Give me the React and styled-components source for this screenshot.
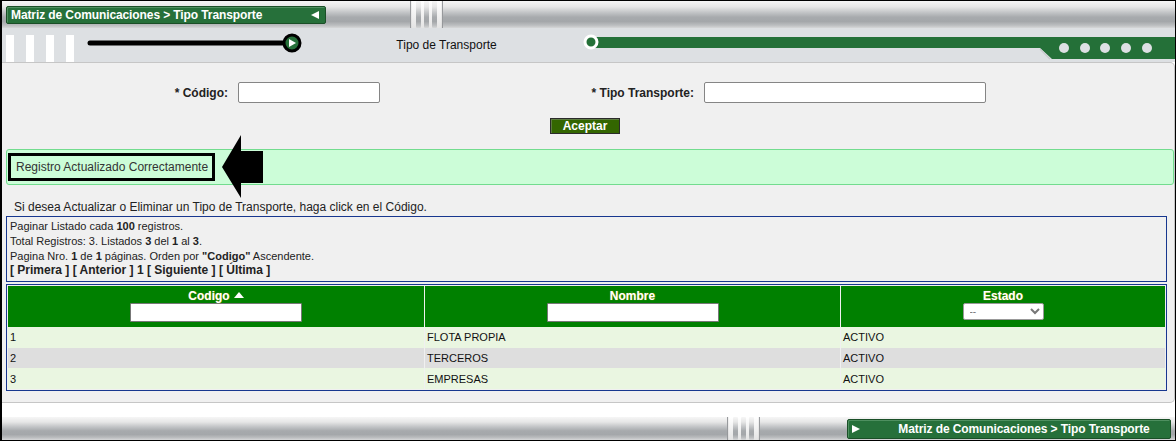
import styled, { createGlobalStyle } from 'styled-components';

const GlobalStyle = createGlobalStyle`
  body {
    margin: 0;
    background: #fff;
    font-family: "Liberation Sans", Arial, sans-serif;
  }
`;

const metal = `linear-gradient(to bottom, #f6f6f6 0%, #e6e6e6 22%, #c3c5c7 42%, #a7aaad 60%, #a4a7aa 76%, #bcbec0 90%, #d6d7d8 100%)`;

const Frame = styled.div`
  width: 1176px;
  height: 441px;
  box-sizing: border-box;
  border: 1px solid #000;
  border-left-width: 2px;
  overflow: hidden;
  display: flex;
  flex-direction: column;
  background: #fff;
`;

const MetalBar = styled.div`
  flex: none;
  height: ${p => p.$h}px;
  display: flex;
  align-items: center;
  background: ${metal};
`;

const Notch = styled.div`
  flex: none;
  align-self: stretch;
  display: flex;
  gap: 3px;
  padding: 0 6px;
  margin-left: ${p => p.$left}px;
  background: linear-gradient(to bottom, #ffffff, #e4e4e4);
  box-shadow: inset 2px 0 1px -1px #8d9093, inset -2px 0 1px -1px #8d9093;
`;

const Stripe = styled.div`
  width: 5px;
  background: ${metal};
  border-radius: 1px;
`;

const Crumb = styled.div`
  flex: none;
  box-sizing: border-box;
  width: ${p => p.$w}px;
  height: ${p => p.$h}px;
  margin-left: ${p => (p.$left === 'auto' ? 'auto' : `${p.$left || 0}px`)};
  margin-right: ${p => p.$right || 0}px;
  display: flex;
  align-items: center;
  gap: 8px;
  padding: 0 6px 0 4px;
  background: #26703a;
  border: 1px solid #1a4f27;
  border-radius: 2px;
  box-shadow: inset 1px 1px 0 #4f9060;
  color: #fff;
  font-size: 12px;
  font-weight: bold;
  white-space: nowrap;
`;

const CrumbText = styled.span`
  flex: 1;
  text-align: ${p => p.$align};
  padding-left: ${p => p.$indent || 0}px;
  letter-spacing: -0.1px;
`;

const Tri = styled.span`
  width: 0;
  height: 0;
  border-top: 4px solid transparent;
  border-bottom: 4px solid transparent;
  ${p => (p.$dir === 'left' ? 'border-right: 8px solid #fff;' : 'border-left: 8px solid #fff;')}
`;

const Band = styled.div`
  flex: none;
  height: 34px;
  display: flex;
  background: #dde0e3;
`;

const Bars = styled.div`
  display: flex;
  gap: 12px;
  margin-left: 4px;
  align-self: flex-end;
`;

const WhiteBar = styled.div`
  width: 8px;
  height: 27px;
  background: #fff;
`;

const BandTitle = styled.div`
  flex: 1;
  text-align: center;
  padding-top: 10px;
  font-size: 12px;
  color: #111;
`;

const Panel = styled.div`
  flex: none;
  height: 341px;
  box-sizing: border-box;
  background: #f0f0f0;
  border: 1px solid #c6c6c6;
  border-left: none;
  border-radius: 0 5px 5px 0;
  padding-left: 1px;
`;

const FormGrid = styled.div`
  display: grid;
  grid-template-columns: 225px 142px 304px 282px;
  column-gap: 10px;
  align-items: center;
  margin-top: 19px;
`;

const Label = styled.label`
  text-align: right;
  font-size: 12px;
  font-weight: bold;
  color: #222;
`;

const TextInput = styled.input`
  box-sizing: border-box;
  width: ${p => p.$w}px;
  height: ${p => p.$h}px;
  border: 1px solid #858585;
  border-radius: 2px;
  background: #fff;
  padding: 0 3px;
  margin: 0;
`;

const ButtonRow = styled.div`
  width: 1164px;
  display: flex;
  justify-content: center;
  margin-top: 15px;
`;

const Button = styled.button`
  box-sizing: border-box;
  width: 70px;
  height: 16px;
  padding: 0;
  background: #336600;
  border: 1px solid #2b2b2b;
  box-shadow: inset 1px 1px 0 #5d7d40;
  color: #fff;
  font-family: "Liberation Sans", Arial, sans-serif;
  font-size: 12px;
  font-weight: bold;
  line-height: 14px;
`;

const Message = styled.div`
  position: relative;
  box-sizing: border-box;
  height: 36px;
  margin: 15px 0 0 3px;
  padding: 3px 1px;
  background: #ccfdd8;
  border: 1px solid #72dc8e;
  border-radius: 3px;
`;

const MessageText = styled.span`
  display: inline-block;
  box-sizing: border-box;
  height: 28px;
  line-height: 22px;
  padding: 0 4px 0 5px;
  border: 3px solid #000;
  font-size: 12px;
  color: #333;
`;

const Arrow = styled.svg`
  position: absolute;
  left: 213px;
  top: -16px;
`;

const Hint = styled.div`
  margin-top: 15px;
  padding-left: 11px;
  font-size: 12px;
  line-height: 14px;
  color: #222;
`;

const InfoBox = styled.div`
  box-sizing: border-box;
  width: 1161px;
  height: 66px;
  margin: 2px 0 0 3px;
  padding: 2px 3px 0;
  border: 1px solid #17378f;
  font-size: 11px;
  line-height: 14.8px;
  color: #222;
`;

const Pager = styled.div`
  font-size: 12px;
  font-weight: bold;
`;

const TableBox = styled.div`
  box-sizing: border-box;
  width: 1161px;
  margin: 2px 0 0 3px;
  padding: 1px 0;
  border: 1px solid #17378f;
`;

const Grid = styled.table`
  width: 100%;
  border-collapse: separate;
  border-spacing: 1px 0;
  table-layout: fixed;
`;

const HeadCell = styled.th`
  height: 41px;
  box-sizing: border-box;
  vertical-align: top;
  padding: 3px 0 0;
  background: #008000;
  color: #fff;
  font-size: 12px;
  font-weight: bold;
  line-height: 14px;
  text-shadow: 0 0 1px #b8a400;
`;

const SortUp = styled.span`
  display: inline-block;
  margin-left: 4px;
  width: 0;
  height: 0;
  vertical-align: 2px;
  border-left: 5px solid transparent;
  border-right: 5px solid transparent;
  border-bottom: 6px solid #fff;
`;

const HeadInput = styled(TextInput)`
  display: block;
  margin: 0 auto;
  border-radius: 1px;
  border-color: #777;
`;

const Select = styled.select`
  display: block;
  margin: 0 auto;
  width: 81px;
  height: 17px;
  font-family: "Liberation Sans", Arial, sans-serif;
  font-size: 10px;
  color: #777;
  border: 1px solid #999;
  border-radius: 2px;
  background: #fff;
  padding: 0 2px;
`;

const Row = styled.tr`
  background: ${p => (p.$alt ? '#dedede' : '#eaf6e1')};
`;

const Cell = styled.td`
  height: 20.7px;
  padding: 0 2px;
  font-size: 11px;
  color: #111;
  white-space: nowrap;
`;

const Spacer = styled.div`
  flex: 1;
`;

const rows = [
  { codigo: '1', nombre: 'FLOTA PROPIA', estado: 'ACTIVO' },
  { codigo: '2', nombre: 'TERCEROS', estado: 'ACTIVO' },
  { codigo: '3', nombre: 'EMPRESAS', estado: 'ACTIVO' },
];

const ruta = 'Matriz de Comunicaciones > Tipo Transporte';

export default function App() {
  return (
    <>
      <GlobalStyle />
      <Frame>
        <MetalBar $h={27}>
          <Crumb $w={320} $h={18} $left={4}>
            <CrumbText $align="left">{ruta}</CrumbText>
            <Tri $dir="left" />
          </Crumb>
          <Notch $left={84}>
            <Stripe />
            <Stripe />
            <Stripe />
          </Notch>
        </MetalBar>

        <Band>
          <Bars>
            <WhiteBar />
            <WhiteBar />
            <WhiteBar />
            <WhiteBar />
          </Bars>
          <svg width="231" height="34" style={{ marginLeft: 6, flex: 'none' }}>
            <line x1="10" y1="15" x2="206" y2="15" stroke="#000" strokeWidth="5" strokeLinecap="round" />
            <circle cx="212" cy="15" r="8" fill="#26703a" stroke="#000" strokeWidth="3" />
            <polygon points="209,11 216,15 209,19" fill="#fff" />
          </svg>
          <BandTitle>Tipo de Transporte</BandTitle>
          <svg width="593" height="34" style={{ flex: 'none' }}>
            <polygon points="12,9 593,9 593,31 470,31 458,20 12,20" fill="#247038" />
            <line x1="458" y1="21" x2="468" y2="31" stroke="#c9ccce" strokeWidth="1.5" />
            <circle cx="9" cy="14" r="6" fill="#247038" stroke="#fff" strokeWidth="3" />
            {[482, 503, 523, 544, 565].map(x => (
              <circle key={x} cx={x} cy="20" r="5" fill="#dde0e3" />
            ))}
          </svg>
        </Band>

        <Panel>
          <FormGrid>
            <Label>* Código:</Label>
            <TextInput $w={142} $h={21} />
            <Label>* Tipo Transporte:</Label>
            <TextInput $w={282} $h={21} />
          </FormGrid>
          <ButtonRow>
            <Button>Aceptar</Button>
          </ButtonRow>

          <Message>
            <MessageText>Registro Actualizado Correctamente</MessageText>
            <Arrow width="46" height="66" viewBox="0 0 46 66">
              <polygon points="2,33 21,1 21,17 43,17 43,49 21,49 21,64" fill="#000" />
            </Arrow>
          </Message>

          <Hint>Si desea Actualizar o Eliminar un Tipo de Transporte, haga click en el Código.</Hint>

          <InfoBox>
            <div>Paginar Listado cada <b>100</b> registros.</div>
            <div>Total Registros: 3. Listados <b>3</b> del <b>1</b> al <b>3</b>.</div>
            <div>Pagina Nro. <b>1</b> de <b>1</b> páginas. Orden por <b>"Codigo"</b> Ascendente.</div>
            <Pager>[ Primera ] [ Anterior ] 1 [ Siguiente ] [ Última ]</Pager>
          </InfoBox>

          <TableBox>
            <Grid>
              <colgroup>
                <col style={{ width: 416 }} />
                <col style={{ width: 415 }} />
                <col />
              </colgroup>
              <thead>
                <tr>
                  <HeadCell>
                    Codigo<SortUp />
                    <HeadInput $w={172} $h={19} />
                  </HeadCell>
                  <HeadCell>
                    Nombre
                    <HeadInput $w={172} $h={19} />
                  </HeadCell>
                  <HeadCell>
                    Estado
                    <Select defaultValue="">
                      <option value="">--</option>
                      <option value="A">ACTIVO</option>
                      <option value="I">INACTIVO</option>
                    </Select>
                  </HeadCell>
                </tr>
              </thead>
              <tbody>
                {rows.map((r, i) => (
                  <Row key={r.codigo} $alt={i % 2 === 1}>
                    <Cell>{r.codigo}</Cell>
                    <Cell>{r.nombre}</Cell>
                    <Cell>{r.estado}</Cell>
                  </Row>
                ))}
              </tbody>
            </Grid>
          </TableBox>
        </Panel>

        <Spacer />

        <MetalBar $h={23}>
          <Notch $left={725}>
            <Stripe />
            <Stripe />
            <Stripe />
          </Notch>
          <Crumb $w={324} $h={20} $left="auto" $right={4}>
            <Tri $dir="right" />
            <CrumbText $align="center" $indent={16}>{ruta}</CrumbText>
          </Crumb>
        </MetalBar>
      </Frame>
    </>
  );
}
